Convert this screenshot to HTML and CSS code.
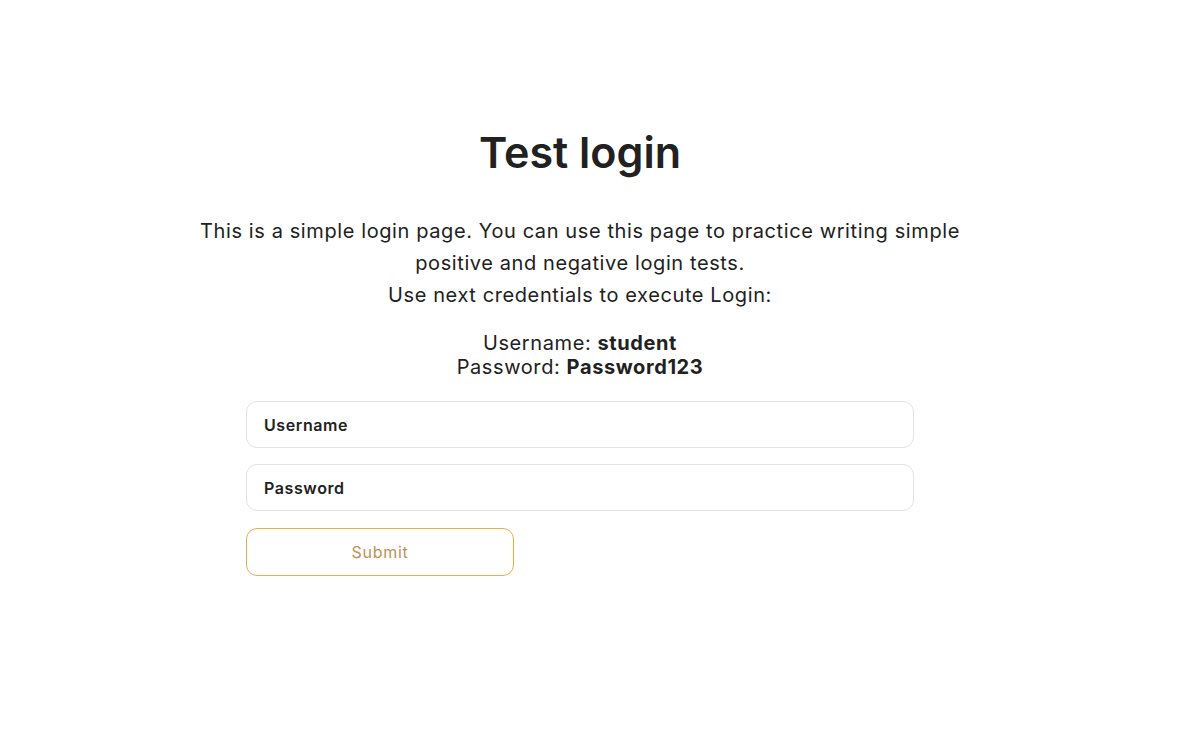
FILE: index.html
```html
<!DOCTYPE html>
<html lang="en">
<head>
<meta charset="utf-8">
<title>Test login</title>
<link rel="stylesheet" href="styles.css">
</head>
<body>
<main class="page">
  <section class="login">
    <h2 class="title">Test login</h2>
    <p class="intro">This is a simple login page. You can use this page to practice writing simple positive and negative login tests.<br>Use next credentials to execute Login:</p>
    <p class="creds">Username: <b>student</b><br>Password: <b>Password123</b></p>
    <form class="form">
      <input class="field" type="text" placeholder="Username">
      <input class="field" type="password" placeholder="Password">
      <button class="submit" type="button">Submit</button>
    </form>
  </section>
</main>
</body>
</html>
```
FILE: styles.css
```css
* { box-sizing: border-box; }
html, body { margin: 0; padding: 0; background: #fff; }
body {
  font-family: Inter, "Noto Sans", sans-serif;
  color: #212121;
}
.page {
  width: 1160px;
  padding-top: 126px;
}
.login {
  display: flex;
  flex-direction: column;
  align-items: center;
}
.title {
  margin: 0;
  font-size: 43px;
  line-height: 52px;
  font-weight: 600;
  color: #212121;
}
.intro {
  margin: 37px 0 0;
  max-width: 800px;
  text-align: center;
  font-size: 20px;
  line-height: 32px;
  letter-spacing: 0.6px;
  color: #212121;
}
.creds {
  margin: 20px 0 0;
  text-align: center;
  font-size: 20px;
  line-height: 24px;
  letter-spacing: 0.6px;
}
.creds b { font-weight: 700; }
.form {
  width: 668px;
  margin-top: 22px;
  display: flex;
  flex-direction: column;
  align-items: flex-start;
  gap: 16px;
}
.field {
  width: 100%;
  height: 47px;
  border: 1px solid #e3e3e3;
  border-radius: 11px;
  padding: 0 17px;
  font-family: inherit;
  font-size: 16px;
  letter-spacing: 0.6px;
  color: #212121;
  outline: none;
}
.field::placeholder {
  color: #212121;
  font-weight: 600;
  opacity: 1;
}
.submit {
  width: 268px;
  height: 48px;
  margin-top: 1px;
  border: 1px solid #e8ad4e;
  border-radius: 11px;
  background: #fff;
  color: #c09055;
  font-family: inherit;
  font-size: 16px;
  letter-spacing: 0.7px;
  cursor: pointer;
}
```
